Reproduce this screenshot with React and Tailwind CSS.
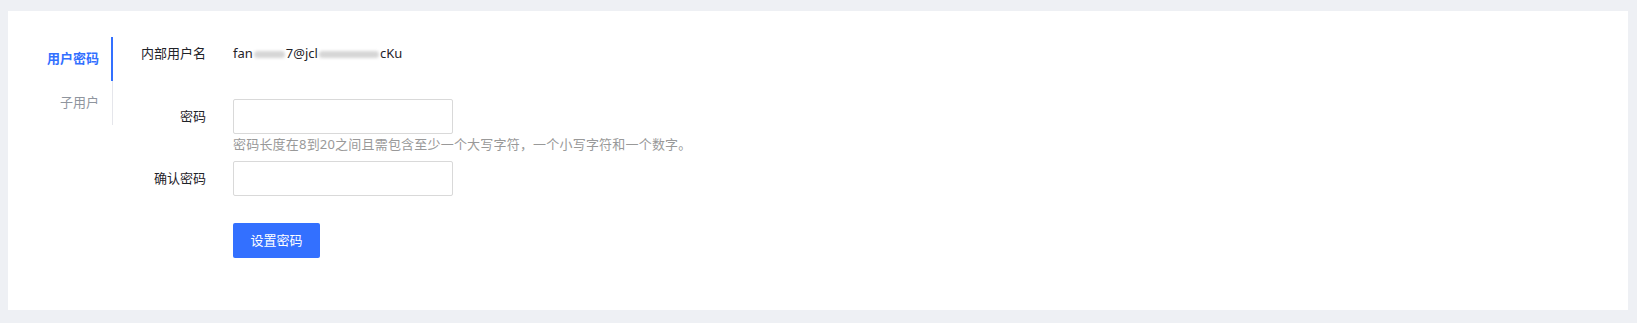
import React from "react";

const FONT = "font-['Noto_Sans','Noto_Sans_CJK_SC',sans-serif]";

function Blur({ w }) {
  return (
    <span
      className="mx-[1px] inline-block h-[7px] rounded-full bg-[#d6d6d6] align-middle blur-[1.5px]"
      style={{ width: w }}
    />
  );
}

function Watermark() {
  const cols = [30, 220, 410, 600, 790, 980, 1170, 1360, 1550];
  const rows = [25, 155, 285];
  return (
    <div className="pointer-events-none absolute inset-0 overflow-hidden" aria-hidden="true">
      {rows.map((y) =>
        cols.map((x) => (
          <span
            key={`${x}-${y}`}
            className="absolute -translate-x-1/2 -translate-y-1/2 -rotate-[20deg] whitespace-nowrap text-[14px] font-light text-[rgba(0,0,0,0.028)]"
            style={{ left: x, top: y }}
          >
            fanwei47-725600
          </span>
        ))
      )}
    </div>
  );
}

export default function App() {
  return (
    <div
      className={`relative h-[323px] w-full overflow-hidden bg-[#eef0f4] pl-[8px] pr-[9px] pt-[11px] ${FONT}`}
    >
      <div className="flex h-[299px] bg-white pt-[26px]">
        {/* tabs */}
        <div className="w-[105px] self-start border-r border-[#e5e6eb] text-[13px]">
          <div className="relative flex h-[44px] items-center justify-end pr-[13px] font-semibold text-[#3370ff]">
            用户密码
            <span className="absolute right-[-1px] top-0 h-full w-[2px] bg-[#3370ff]" />
          </div>
          <div className="flex h-[44px] items-center justify-end pr-[13px] text-[#8f959e]">
            子用户
          </div>
        </div>

        {/* form */}
        <div className="flex flex-col text-[13px] text-[#1f2329]">
          <div className="flex h-[34px] items-center">
            <div className="w-[93px] text-right">内部用户名</div>
            <div className="ml-[27px] flex items-center">
              <span>fan</span>
              <Blur w={31} />
              <span>7@jcl</span>
              <Blur w={60} />
              <span>cKu</span>
            </div>
          </div>

          <div className="mt-[28px] flex items-center">
            <div className="w-[93px] text-right">密码</div>
            <input
              type="password"
              className="ml-[27px] h-[35px] w-[220px] rounded-[2px] border border-[#d9d9d9] bg-white px-[10px] outline-none"
            />
          </div>
          <div className="ml-[120px] text-[13px] leading-[20px] tracking-[0.2px] text-[#999999]">
            密码长度在8到20之间且需包含至少一个大写字符，一个小写字符和一个数字。
          </div>

          <div className="mt-[7px] flex items-center">
            <div className="w-[93px] text-right">确认密码</div>
            <input
              type="password"
              className="ml-[27px] h-[35px] w-[220px] rounded-[2px] border border-[#d9d9d9] bg-white px-[10px] outline-none"
            />
          </div>

          <div className="ml-[120px] mt-[27px]">
            <button className="flex h-[35px] w-[87px] items-center justify-center rounded-[2px] bg-[#3370ff] text-[13px] text-white">
              设置密码
            </button>
          </div>
        </div>
      </div>
      <Watermark />
    </div>
  );
}
